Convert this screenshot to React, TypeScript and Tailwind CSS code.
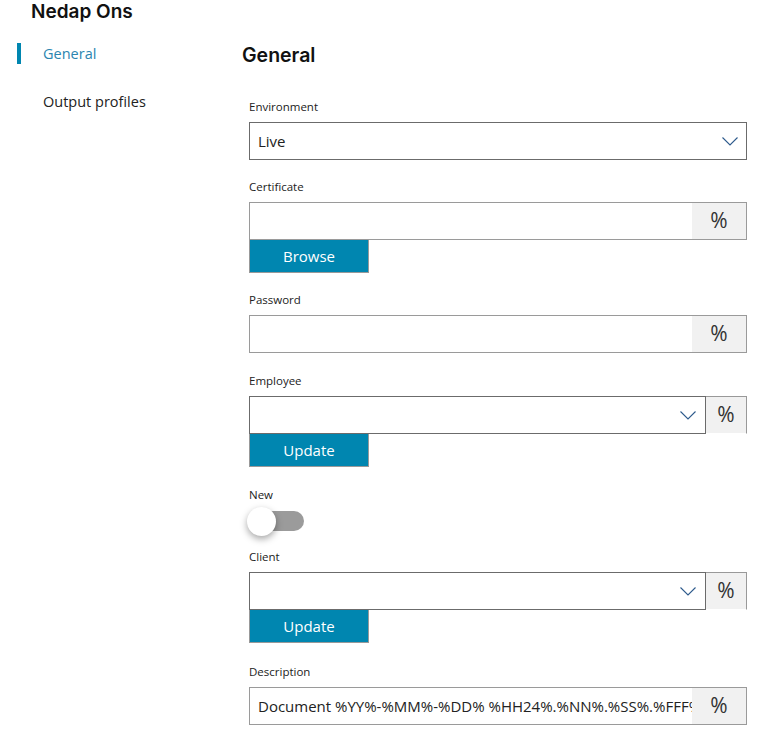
const body = "font-['Open_Sans',sans-serif]";

function Chevron() {
  return (
    <svg width="16" height="9" viewBox="0 0 16 9" fill="none">
      <path d="M0.5 0.5 L8 8 L15.5 0.5" stroke="#2d5a8c" strokeWidth="1.1" />
    </svg>
  );
}

function Label({ children }: { children: React.ReactNode }) {
  return <div className="h-4 text-[11.5px] leading-4 text-[#222] mb-[7px]">{children}</div>;
}

function Addon({ narrow }: { narrow?: boolean }) {
  return (
    <div
      className={`flex items-center justify-center bg-[#f1f1f1] text-[21px] text-[#333] ${
        narrow ? "w-[41px] border border-l-0 border-[#999] border-b-white" : "w-[54px]"
      }`}
    >
      %
    </div>
  );
}

function TextField({ value }: { value?: string }) {
  return (
    <div className="flex h-[38px] w-[498px] border border-[#9a9a9a] bg-white">
      <div className="flex-1 min-w-0 overflow-hidden whitespace-nowrap pl-2 flex items-center text-[15px] text-[#222]">
        {value}
      </div>
      <Addon />
    </div>
  );
}

function SelectWithAddon() {
  return (
    <div className="flex h-[38px] w-[498px]">
      <div className="flex-1 flex items-center justify-end pr-[9px] border border-[#6b6b6b] bg-white">
        <Chevron />
      </div>
      <Addon narrow />
    </div>
  );
}

function BlueButton({ label }: { label: string }) {
  return (
    <button className="h-[33px] w-[120px] border border-[#999] border-t-0 bg-[#0086b0] text-white text-[15px] flex items-center justify-center">
      {label}
    </button>
  );
}

export default function App() {
  return (
    <div className={`${body} bg-white w-[767px] h-[739px] overflow-hidden text-[#222]`}>
      <div className="pl-[31px] h-[26px] leading-[24px] font-['Inter',sans-serif] font-semibold text-[19px] text-[#111]">
        Nedap Ons
      </div>
      <div className="flex mt-[17px]">
        <nav className="w-[242px] shrink-0">
          <div className="flex items-center h-[21px]">
            <div className="ml-[17px] w-[4px] h-[21px] bg-[#0086b0]" />
            <span className="ml-[22px] text-[14.5px] text-[#2b85b0]">General</span>
          </div>
          <div className="mt-[27px] h-[21px] flex items-center pl-[43px] text-[14.5px] text-[#222]">
            Output profiles
          </div>
        </nav>
        <main className="flex-1">
          <h1 className="mt-[2px] h-[21px] flex items-center font-['Inter',sans-serif] font-semibold text-[19.5px] text-[#111]">
            General
          </h1>
          <div className="ml-[7px] mt-[33px]">
            <Label>Environment</Label>
            <div className="flex h-[38px] w-[498px] items-center justify-between border border-[#6b6b6b] pl-2 pr-[8px]">
              <span className="text-[15px]">Live</span>
              <Chevron />
            </div>

            <div className="mt-[19px]">
              <Label>Certificate</Label>
              <TextField />
              <BlueButton label="Browse" />
            </div>

            <div className="mt-[19px]">
              <Label>Password</Label>
              <TextField />
            </div>

            <div className="mt-[20px]">
              <Label>Employee</Label>
              <SelectWithAddon />
              <BlueButton label="Update" />
            </div>

            <div className="mt-[20px]">
              <Label>New</Label>
              <div className="relative h-[31px] w-[60px]">
                <div className="absolute left-[13px] top-[1px] h-[20px] w-[42px] rounded-full bg-[#9b9b9b]" />
                <div className="absolute left-[-2px] top-[-3px] h-[29px] w-[29px] rounded-full bg-white shadow-[0_3px_7px_rgba(0,0,0,0.35)]" />
              </div>
            </div>

            <div className="mt-[8px]">
              <Label>Client</Label>
              <SelectWithAddon />
              <BlueButton label="Update" />
            </div>

            <div className="mt-[21px]">
              <Label>Description</Label>
              <TextField value="Document %YY%-%MM%-%DD% %HH24%.%NN%.%SS%.%FFF%" />
            </div>
          </div>
        </main>
      </div>
    </div>
  );
}
